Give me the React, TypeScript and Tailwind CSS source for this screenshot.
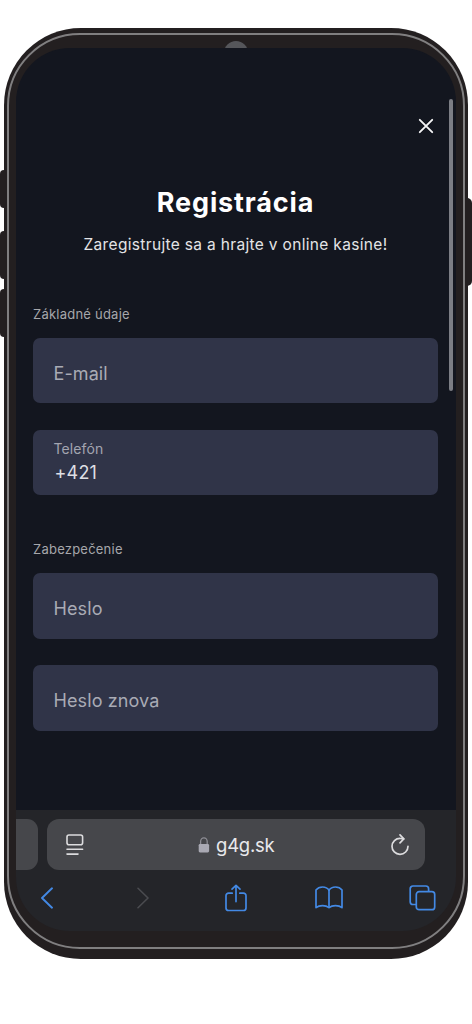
type FieldProps = {
  label: string;
  value?: string;
};

const Field = ({ label, value }: FieldProps) => {
  return (
    <label className="block h-[65.5px] rounded-[7px] bg-[#303448] px-[20.5px]">
      {value ? (
        <span className="flex flex-col pt-[11px]">
          <span className="text-[14px] leading-[16px] tracking-[0.1px] text-[#a3a5b0]">
            {label}
          </span>
          <span className="mt-[6px] pl-px text-[18px] leading-[20px] tracking-[0.2px] text-[#dedfe4]">
            {value}
          </span>
        </span>
      ) : (
        <span className="flex h-full items-center pt-[6.5px] text-[18px] leading-[20px] tracking-[0.1px] text-[#a9abb5]">
          {label}
        </span>
      )}
    </label>
  );
};

const SectionTitle = ({ text }: { text: string }) => (
  <h2 className="h-[16px] text-[13px] leading-[16px] tracking-[0.23px] text-[#a6a7ab]">
    {text}
  </h2>
);

const CloseIcon = () => (
  <svg
    width="16"
    height="16"
    viewBox="0 0 16 16"
    fill="none"
    stroke="#f4f4f5"
    strokeWidth="1.9"
    strokeLinecap="round"
  >
    <path d="M1.8 1.8 14.2 14.2M14.2 1.8 1.8 14.2" />
  </svg>
);

const ReaderIcon = () => (
  <svg
    width="18"
    height="22"
    viewBox="0 0 18 22"
    fill="none"
    stroke="#dcdcde"
    strokeWidth="1.6"
    strokeLinecap="round"
  >
    <rect x="1" y="1" width="15.6" height="9.8" rx="2" />
    <path d="M1 15.3h15.6M1 20.1h11" />
  </svg>
);

const LockIcon = () => (
  <svg width="12" height="16" viewBox="0 0 12 16" fill="none">
    <path
      d="M2.6 8V4.6a3.3 3.8 0 0 1 6.6 0V8"
      stroke="#8d8d94"
      strokeWidth="1.3"
    />
    <rect x="0.7" y="7" width="10.4" height="8.4" rx="1.3" fill="#a9a9b3" />
  </svg>
);

const ReloadIcon = () => (
  <svg
    width="18"
    height="22"
    viewBox="0 0 18 22"
    fill="none"
    stroke="#dcdcde"
    strokeWidth="1.7"
    strokeLinecap="round"
    strokeLinejoin="round"
  >
    <path d="M12.6 4.9C11.6 4.500 10.400 4.300 9.200 4.300A8 8 0 1 0 17 12.300" />
    <path d="M9 .9 12.800 4.900 9 8.800" />
  </svg>
);

const BackIcon = () => (
  <svg
    width="12"
    height="22"
    viewBox="0 0 12 22"
    fill="none"
    stroke="#4389e4"
    strokeWidth="1.9"
    strokeLinecap="round"
    strokeLinejoin="round"
  >
    <path d="M11 1.3 1 11l10 9.7" />
  </svg>
);

const ForwardIcon = () => (
  <svg
    width="12"
    height="22"
    viewBox="0 0 12 22"
    fill="none"
    stroke="#4a4b4f"
    strokeWidth="1.6"
    strokeLinecap="round"
    strokeLinejoin="round"
  >
    <path d="M1 1.3 11 11 1 20.7" />
  </svg>
);

const ShareIcon = () => (
  <svg
    width="22"
    height="28"
    viewBox="0 0 22 28"
    fill="none"
    stroke="#4389e4"
    strokeWidth="1.7"
    strokeLinecap="round"
    strokeLinejoin="round"
  >
    <path d="M7.2 9.2H3.6A2.6 2.6 0 0 0 1 11.8v12.1a2.6 2.6 0 0 0 2.6 2.6h14.8a2.6 2.6 0 0 0 2.6-2.6V11.8a2.6 2.6 0 0 0-2.6-2.6h-3.6" />
    <path d="M11 17.6V1.4M7 5.2l4-3.9 4 3.9" />
  </svg>
);

const BookIcon = () => (
  <svg
    width="28"
    height="23"
    viewBox="0 0 28 23"
    fill="none"
    stroke="#4389e4"
    strokeWidth="1.7"
    strokeLinejoin="round"
  >
    <path d="M14 4.2C12.6 2.1 10.4 1 7.6 1S2.4 2.1 1 4v17.6c1.600-1.300 3.700-2 6.500-2s5 .8 6.500 2c1.500-1.200 3.700-2 6.500-2s4.900.7 6.500 2V4C25.600 2.100 23.200 1 20.400 1S15.400 2.100 14 4.200Z" />
    <path d="M14 4v17.6" />
  </svg>
);

const TabsIcon = () => (
  <svg
    width="27"
    height="26"
    viewBox="0 0 27 26"
    fill="none"
    stroke="#4389e4"
    strokeWidth="1.7"
  >
    <rect x="7.3" y="6.7" width="18.4" height="18" rx="2.8" />
    <path d="M7.3 19.5H4A2.8 2.8 0 0 1 1.2 16.7V3.8A2.8 2.8 0 0 1 4 1h12.8A2.8 2.8 0 0 1 19.6 3.8V6.7" />
  </svg>
);

const RegistrationForm = () => (
  <main className="relative h-[762.5px] bg-[#13161f] pr-[18px] pl-[17px]">
    <div className="flex justify-end pt-[70px] pr-[4.5px]">
      <button type="button" aria-label="Zavrieť" className="block">
        <CloseIcon />
      </button>
    </div>
    <h1 className="mt-[53px] text-center text-[27px] leading-[32px] font-bold tracking-[0.85px] text-white">
      Registrácia
    </h1>
    <p className="mt-[16px] text-center text-[15.5px] leading-[20px] tracking-[0.33px] text-[#e4e4e6]">
      Zaregistrujte sa a hrajte v online kasíne!
    </p>
    <form>
      <section className="mt-[51px]">
        <SectionTitle text="Základné údaje" />
        <div className="mt-[16px] flex flex-col gap-[26.5px]">
          <Field label="E-mail" />
          <Field label="Telefón" value="+421" />
        </div>
      </section>
      <section className="mt-[46px]">
        <SectionTitle text="Zabezpečenie" />
        <div className="mt-[16px] flex flex-col gap-[26.5px]">
          <Field label="Heslo" />
          <Field label="Heslo znova" />
        </div>
      </section>
    </form>
    <div className="absolute top-[51px] right-[3px] h-[292.5px] w-[4px] rounded-full bg-[#7c7e85]" />
  </main>
);

const BrowserBar = () => (
  <footer className="h-[120.5px] bg-[#242529] pt-[9px]">
    <div className="flex h-[51px] gap-[9.5px]">
      <div className="w-[21.5px] rounded-r-[11px] bg-[#46474b]" />
      <div className="flex w-[377.5px] items-center rounded-[12px] bg-[#46474b] pr-[16px] pl-[19px]">
        <ReaderIcon />
        <div className="flex flex-1 items-center justify-center gap-[6px] pr-[2px]">
          <LockIcon />
          <span className="text-[18.5px] leading-[24px] tracking-[-0.25px] text-[#e9e9eb]">
            g4g.sk
          </span>
        </div>
        <ReloadIcon />
      </div>
    </div>
    <nav className="flex h-[56px] items-center pl-[25px]">
      <BackIcon />
      <div className="ml-[84px]">
        <ForwardIcon />
      </div>
      <div className="ml-[75.5px] pb-[1px]">
        <ShareIcon />
      </div>
      <div className="ml-[68.5px] pb-[1px]">
        <BookIcon />
      </div>
      <div className="ml-[66px]">
        <TabsIcon />
      </div>
    </nav>
  </footer>
);

export default function App() {
  return (
    <div className="h-[1024px] w-[472px] overflow-hidden bg-white pt-[28px] pl-[4px] font-['Inter',sans-serif]">
      <div className="relative h-[930.5px] w-[463.5px] rounded-[77px] bg-[#231f20] px-[3px] pt-[5px] pb-[9.5px]">
        <div className="absolute top-[141.5px] -left-[4px] h-[38px] w-[5px] rounded-l-[4px] bg-[#231f20]" />
        <div className="absolute top-[203px] -left-[4px] h-[48px] w-[5px] rounded-l-[4px] bg-[#231f20]" />
        <div className="absolute top-[260.5px] -left-[4px] h-[48px] w-[5px] rounded-l-[4px] bg-[#231f20]" />
        <div className="absolute top-[170px] -right-[4px] h-[87.5px] w-[5px] rounded-r-[5px] bg-[#231f20]" />
        <div className="h-full rounded-[73px] border-2 border-[#807f80] pt-[12.5px] pl-[7px]">
          <div className="absolute top-[13px] left-[219.5px] h-[24px] w-[24px] rounded-full bg-[#55565a]" />
          <div className="relative h-[883px] w-[440px] overflow-hidden rounded-[54px]">
            <RegistrationForm />
            <BrowserBar />
          </div>
        </div>
      </div>
    </div>
  );
}
